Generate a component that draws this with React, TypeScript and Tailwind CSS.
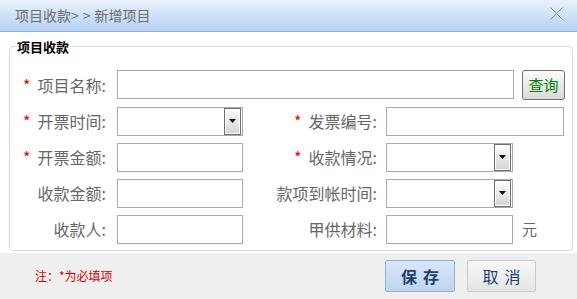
import React from "react";

const FONT = "font-['Noto_Sans_CJK_SC','Microsoft_YaHei',sans-serif]";

function Label({ text, required, width }: { text: string; required?: boolean; width: string }) {
  return (
    <div className={`${width} shrink-0 text-right text-[16px] leading-none text-[#666]`}>
      {required ? <span className="mr-[7px] text-[#e00]">*</span> : null}
      {text}
    </div>
  );
}

function TextBox({ width }: { width: string }) {
  return <div className={`${width} h-[29px] shrink-0 border border-[#a9a9a9] bg-white`} />;
}

function SelectBox({ width }: { width: string }) {
  return (
    <div className={`${width} flex h-[29px] shrink-0 justify-end border border-[#a9a9a9] bg-white pr-[1px]`}>
      <div className="flex w-[17px] items-center justify-center border border-[#6f6f6f] bg-gradient-to-b from-[#fefefe] to-[#d4d4d4] shadow-[inset_0_0_0_1px_#fff]">
        <svg width="7" height="4" viewBox="0 0 7 4">
          <path d="M0 0h7L3.5 4z" fill="#111" />
        </svg>
      </div>
    </div>
  );
}

const ROWS = [
  { left: "开票时间:", leftReq: true, leftSelect: true, right: "发票编号:", rightReq: true, right2: "text" },
  { left: "开票金额:", leftReq: true, leftSelect: false, right: "收款情况:", rightReq: true, right2: "select" },
  { left: "收款金额:", leftReq: false, leftSelect: false, right: "款项到帐时间:", rightReq: false, right2: "select" },
  { left: "收款人:", leftReq: false, leftSelect: false, right: "甲供材料:", rightReq: false, right2: "yuan" },
] as const;

export default function App() {
  return (
    <div className={`${FONT} h-[299px] w-[577px] overflow-hidden bg-white`}>
      <header className="flex h-[32px] items-center justify-between border-b border-[#91b2e1] bg-gradient-to-b from-[#eaf2fc] to-[#b7d1f4] pl-[15px] pr-[14px]">
        <span className="flex items-center text-[14px] text-[#6d6d6d]">
          项目收款<span className="mr-[4px]">&gt;</span>
          <span className="mr-[4px]">&gt;</span>新增项目
        </span>
        <svg width="13" height="13" viewBox="0 0 13 13" className="mb-[4px]">
          <path d="M0.5 0.5l12 12M12.5 0.5l-12 12" stroke="#8a8a8a" strokeWidth="1" fill="none" />
        </svg>
      </header>

      <div className="pb-[2px] pt-[5px]">
        <fieldset className="ml-[9px] mr-[4px] rounded-[4px] border border-[#d3dbe6] pb-[6px] pt-[13px]">
          <legend className="ml-[6px] px-[1px] text-[13px] font-bold text-black">项目收款</legend>
          <div className="flex flex-col gap-[7px]">
            <div className="flex items-center">
              <Label text="项目名称:" required width="w-[96px]" />
              <div className="ml-[11px] flex items-center gap-[8px]">
                <TextBox width="w-[397px]" />
                <button
                  type="button"
                  className="h-[30px] w-[43px] rounded-[3px] border border-[#707070] bg-gradient-to-b from-[#fbfbfb] to-[#d9d9d9] text-[15px] leading-none text-[#008000]"
                >
                  查询
                </button>
              </div>
            </div>
            {ROWS.map((r) => (
              <div key={r.left} className="flex items-center">
                <Label text={r.left} required={r.leftReq} width="w-[96px]" />
                <div className="ml-[11px]">
                  {r.leftSelect ? <SelectBox width="w-[126px]" /> : <TextBox width="w-[126px]" />}
                </div>
                <Label text={r.right} required={r.rightReq} width="w-[134px]" />
                <div className="ml-[9px] flex items-center">
                  {r.right2 === "text" ? <TextBox width="w-[178px]" /> : null}
                  {r.right2 === "select" ? <SelectBox width="w-[127px]" /> : null}
                  {r.right2 === "yuan" ? (
                    <>
                      <TextBox width="w-[127px]" />
                      <span className="ml-[9px] text-[15px] text-[#666]">元</span>
                    </>
                  ) : null}
                </div>
              </div>
            ))}
          </div>
        </fieldset>
      </div>

      <footer className="flex h-[47px] items-center bg-[#efefef] pl-[35px] pr-[41px]">
        <span className="text-[12px] text-[#d00000]">注：*为必填项</span>
        <div className="ml-auto flex gap-[12px]">
          <button
            type="button"
            className="flex h-[32px] w-[70px] items-center justify-center gap-[6px] rounded-[2px] border border-[#93b3dc] bg-gradient-to-b from-[#d9e7f8] to-[#bfd5ef] text-[16px] font-bold leading-none text-[#1d3f73]"
          >
            <span>保</span>
            <span>存</span>
          </button>
          <button
            type="button"
            className="flex h-[32px] w-[69px] items-center justify-center gap-[6px] rounded-[2px] border border-[#c9c9c9] bg-gradient-to-b from-[#f8f8f8] to-[#e4e4e4] text-[16px] leading-none text-[#1d3f73]"
          >
            <span>取</span>
            <span>消</span>
          </button>
        </div>
      </footer>
    </div>
  );
}
